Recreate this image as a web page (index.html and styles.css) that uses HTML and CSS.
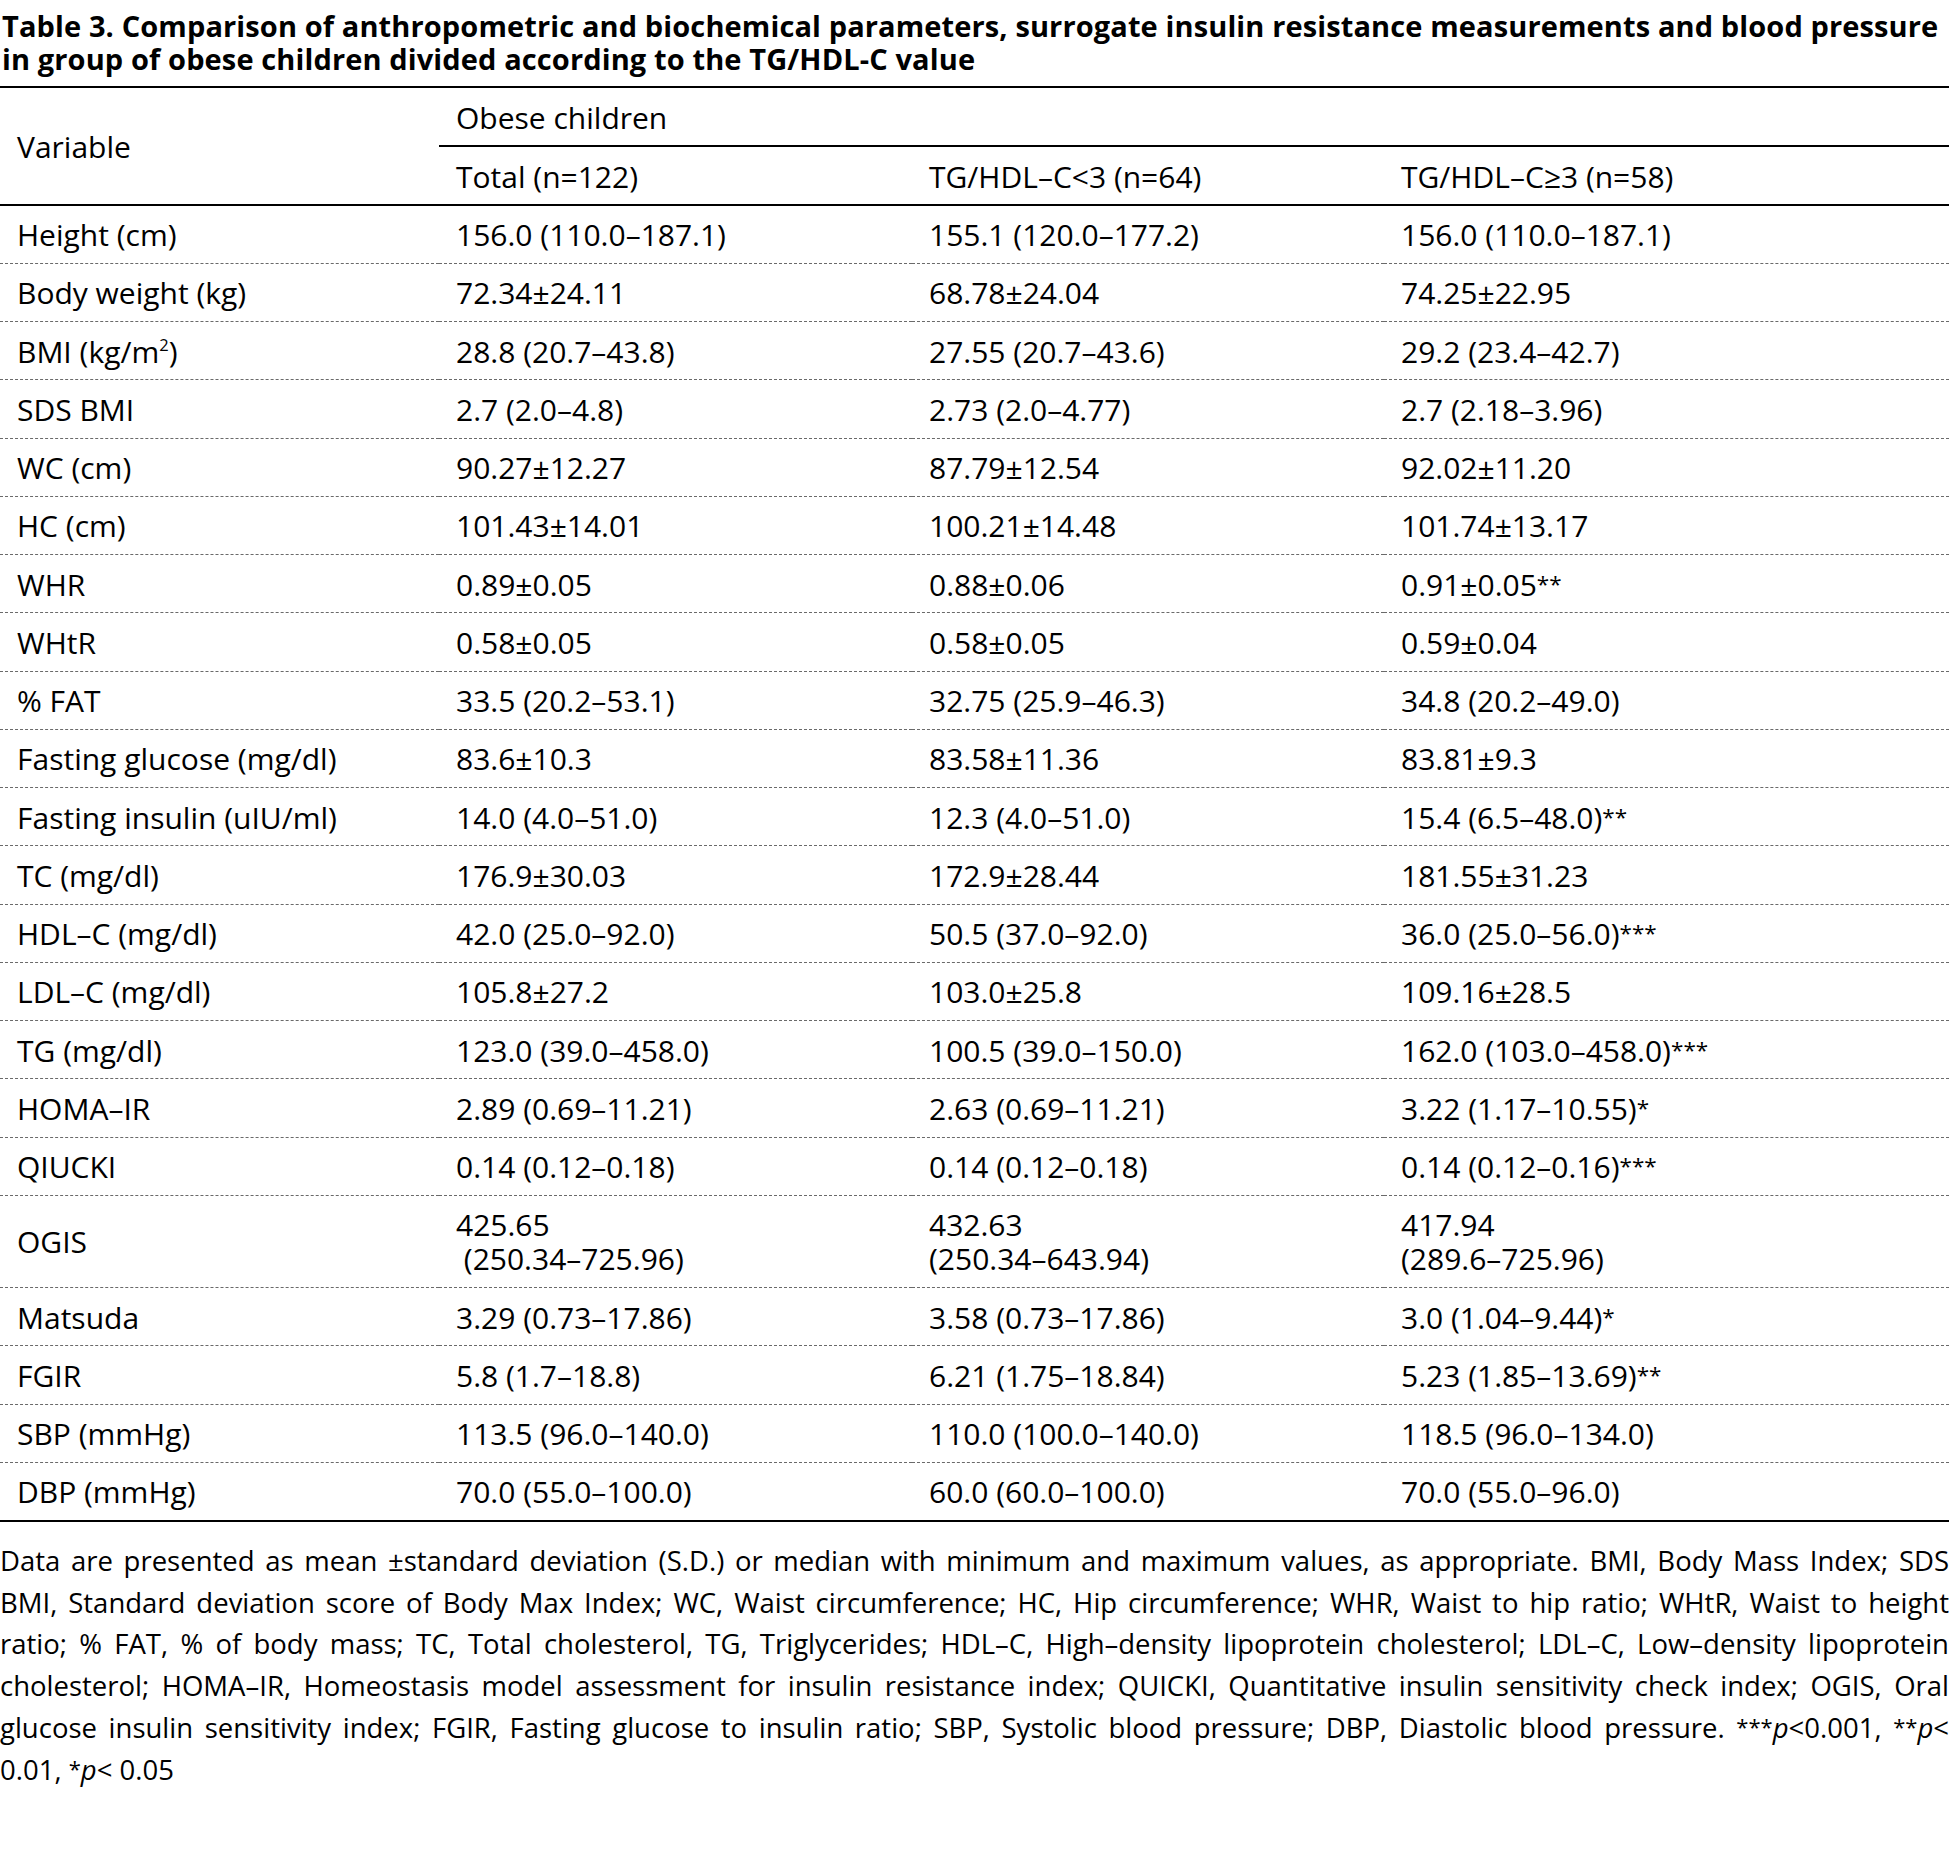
FILE: index.html
```html
<!DOCTYPE html>
<html lang="en">
<head>
<meta charset="utf-8">
<title>Table 3</title>
<link rel="stylesheet" href="styles.css">
</head>
<body>
<div class="page">
  <h1 class="caption">Table 3. Comparison of anthropometric and biochemical parameters, surrogate insulin resistance measurements and blood pressure<br>in group of obese children divided according to the TG/HDL-C value</h1>
  <table class="data">
    <colgroup>
      <col class="c1"><col class="c2"><col class="c3"><col class="c4">
    </colgroup>
    <thead>
      <tr class="h1">
        <th rowspan="2" class="var">Variable</th>
        <th colspan="3" class="group">Obese children</th>
      </tr>
      <tr class="h2">
        <th>Total (n=122)</th>
        <th>TG/HDL–C&lt;3 (n=64)</th>
        <th>TG/HDL–C≥3 (n=58)</th>
      </tr>
    </thead>
    <tbody>
      <tr><td>Height (cm)</td><td>156.0 (110.0–187.1)</td><td>155.1 (120.0–177.2)</td><td>156.0 (110.0–187.1)</td></tr>
      <tr><td>Body weight (kg)</td><td>72.34±24.11</td><td>68.78±24.04</td><td>74.25±22.95</td></tr>
      <tr><td>BMI (kg/m<sup class="sq">2</sup>)</td><td>28.8 (20.7–43.8)</td><td>27.55 (20.7–43.6)</td><td>29.2 (23.4–42.7)</td></tr>
      <tr><td>SDS BMI</td><td>2.7 (2.0–4.8)</td><td>2.73 (2.0–4.77)</td><td>2.7 (2.18–3.96)</td></tr>
      <tr><td>WC (cm)</td><td>90.27±12.27</td><td>87.79±12.54</td><td>92.02±11.20</td></tr>
      <tr><td>HC (cm)</td><td>101.43±14.01</td><td>100.21±14.48</td><td>101.74±13.17</td></tr>
      <tr><td>WHR</td><td>0.89±0.05</td><td>0.88±0.06</td><td>0.91±0.05<span class="sig">**</span></td></tr>
      <tr><td>WHtR</td><td>0.58±0.05</td><td>0.58±0.05</td><td>0.59±0.04</td></tr>
      <tr><td>% FAT</td><td>33.5 (20.2–53.1)</td><td>32.75 (25.9–46.3)</td><td>34.8 (20.2–49.0)</td></tr>
      <tr><td>Fasting glucose (mg/dl)</td><td>83.6±10.3</td><td>83.58±11.36</td><td>83.81±9.3</td></tr>
      <tr><td>Fasting insulin (uIU/ml)</td><td>14.0 (4.0–51.0)</td><td>12.3 (4.0–51.0)</td><td>15.4 (6.5–48.0)<span class="sig">**</span></td></tr>
      <tr><td>TC (mg/dl)</td><td>176.9±30.03</td><td>172.9±28.44</td><td>181.55±31.23</td></tr>
      <tr><td>HDL–C (mg/dl)</td><td>42.0 (25.0–92.0)</td><td>50.5 (37.0–92.0)</td><td>36.0 (25.0–56.0)<span class="sig">***</span></td></tr>
      <tr><td>LDL–C (mg/dl)</td><td>105.8±27.2</td><td>103.0±25.8</td><td>109.16±28.5</td></tr>
      <tr><td>TG (mg/dl)</td><td>123.0 (39.0–458.0)</td><td>100.5 (39.0–150.0)</td><td>162.0 (103.0–458.0)<span class="sig">***</span></td></tr>
      <tr><td>HOMA–IR</td><td>2.89 (0.69–11.21)</td><td>2.63 (0.69–11.21)</td><td>3.22 (1.17–10.55)<span class="sig">*</span></td></tr>
      <tr><td>QIUCKI</td><td>0.14 (0.12–0.18)</td><td>0.14 (0.12–0.18)</td><td>0.14 (0.12–0.16)<span class="sig">***</span></td></tr>
      <tr><td>OGIS</td><td><span class="two">425.65<br>&nbsp;(250.34–725.96)</span></td><td><span class="two">432.63<br>(250.34–643.94)</span></td><td><span class="two">417.94<br>(289.6–725.96)</span></td></tr>
      <tr><td>Matsuda</td><td>3.29 (0.73–17.86)</td><td>3.58 (0.73–17.86)</td><td>3.0 (1.04–9.44)<span class="sig">*</span></td></tr>
      <tr><td>FGIR</td><td>5.8 (1.7–18.8)</td><td>6.21 (1.75–18.84)</td><td>5.23 (1.85–13.69)<span class="sig">**</span></td></tr>
      <tr><td>SBP (mmHg)</td><td>113.5 (96.0–140.0)</td><td>110.0 (100.0–140.0)</td><td>118.5 (96.0–134.0)</td></tr>
      <tr><td>DBP (mmHg)</td><td>70.0 (55.0–100.0)</td><td>60.0 (60.0–100.0)</td><td>70.0 (55.0–96.0)</td></tr>
    </tbody>
  </table>
  <p class="note"><span class="ln">Data are presented as mean ±standard deviation (S.D.) or median with minimum and maximum values, as appropriate. BMI, Body Mass Index; SDS</span>
<span class="ln">BMI, Standard deviation score of Body Max Index; WC, Waist circumference; HC, Hip circumference; WHR, Waist to hip ratio; WHtR, Waist to height</span>
<span class="ln">ratio; % FAT, % of body mass; TC, Total cholesterol, TG, Triglycerides; HDL–C, High–density lipoprotein cholesterol; LDL–C, Low–density lipoprotein</span>
<span class="ln">cholesterol; HOMA–IR, Homeostasis model assessment for insulin resistance index; QUICKI, Quantitative insulin sensitivity check index; OGIS, Oral</span>
<span class="ln">glucose insulin sensitivity index; FGIR, Fasting glucose to insulin ratio; SBP, Systolic blood pressure; DBP, Diastolic blood pressure. <span class="ast">***</span><i>p</i>&lt;0.001, <span class="ast">**</span><i>p</i>&lt;</span>
<span class="ln last">0.01, <span class="ast">*</span><i>p</i>&lt; 0.05</span></p>
</div>
</body>
</html>
```

FILE: styles.css
```css
html, body {
  margin: 0;
  padding: 0;
  background: #ffffff;
}

body {
  font-family: "Open Sans", "Noto Sans", "Liberation Sans", sans-serif;
  color: #000000;
}

.page {
  width: 1949px;
}

.caption {
  margin: 9px 0 0 0;
  padding: 0 0 0 2px;
  font-size: 29px;
  line-height: 33px;
  letter-spacing: 0.12px;
  font-weight: 700;
  white-space: nowrap;
}

.data {
  margin-top: 11px;
  width: 100%;
  border-collapse: collapse;
  table-layout: fixed;
  font-size: 30px;
  line-height: 34px;
  border-top: 2px solid #000;
  border-bottom: 2px solid #000;
}

.c1 { width: 439px; }
.c2 { width: 473px; }
.c3 { width: 472px; }
.c4 { width: auto; }

.data th,
.data td {
  text-align: left;
  font-weight: 400;
  padding: 12.5px 8px 10px 17px;
  vertical-align: middle;
  white-space: nowrap;
}

.data .group {
  border-bottom: 2px solid #000;
}

.data .var {
  border-bottom: 2px solid #000;
}

.data .h2 th {
  border-bottom: 2px solid #000;
  padding-top: 13px;
}

.data tbody td {
  padding-bottom: 10.75px;
  border-bottom: 1px dashed #6a6a6a;
}

.data tbody tr:last-child td {
  border-bottom: 2px solid #000;
}

.data .two {
  display: inline-block;
  line-height: 34px;
}

.sq {
  font-size: 0.55em;
  line-height: 0;
  vertical-align: 0.7em;
}

.sig {
  font-size: 0.75em;
  line-height: 0;
  vertical-align: 0.2em;
}

.note {
  margin: 18px 0 0 0;
  font-size: 27.5px;
  line-height: 41.7px;
}

.note .ln {
  display: block;
  white-space: nowrap;
  text-align: justify;
  text-align-last: justify;
}

.note .ln.last {
  text-align-last: left;
}

.note .ast {
  font-size: 0.8em;
  vertical-align: 0.15em;
  line-height: 0;
}
```
